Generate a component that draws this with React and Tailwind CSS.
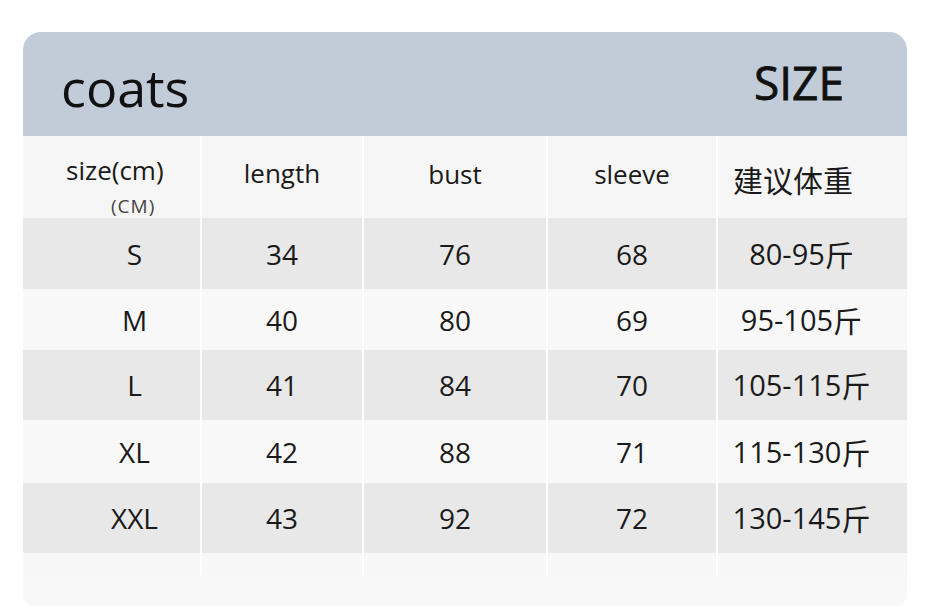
import React from "react";

const rows = [
  { h: "h-[71px]", bg: "bg-[#e8e8e8]", s: "S", l: "34", b: "76", sl: "68", w: "80-95" },
  { h: "h-[61px]", bg: "bg-[#f8f8f8]", s: "M", l: "40", b: "80", sl: "69", w: "95-105" },
  { h: "h-[70px]", bg: "bg-[#e8e8e8]", s: "L", l: "41", b: "84", sl: "70", w: "105-115" },
  { h: "h-[63px]", bg: "bg-[#f8f8f8]", s: "XL", l: "42", b: "88", sl: "71", w: "115-130" },
  { h: "h-[70px]", bg: "bg-[#e8e8e8]", s: "XXL", l: "43", b: "92", sl: "72", w: "130-145" },
];

const font = { fontFamily: '"Open Sans", "Noto Sans CJK SC", sans-serif' };

export default function App() {
  return (
    <div className="w-[932px] h-[606px] bg-white pt-[32px] pl-[23px] overflow-hidden" style={font}>
      <div className="w-[884px] h-[574px] rounded-t-[18px] rounded-b-[12px] overflow-hidden bg-[#f8f8f8] flex flex-col text-[#1a1a1a]">
        <div className="h-[104px] bg-[#c2cbd8] flex items-start justify-between pl-[38px] pr-[63px]">
          <div className="text-[52px] leading-[52px] pt-[29px] text-[#111]">coats</div>
          <div className="text-[46px] leading-[46px] pt-[27px] text-[#111] [-webkit-text-stroke:0.8px_#111]">SIZE</div>
        </div>

        <div className="grid grid-cols-[177px_160px_182px_168px_189px] gap-x-[2px] bg-white">
          {/* header row */}
          <div className="h-[82px] bg-[#f6f6f6] flex flex-col">
            <div className="text-[26px] leading-[30px] pt-[19px] pl-[43px]">size(cm)</div>
            <div className="text-[19px] leading-[20px] pt-[11px] pl-[88px] tracking-[1px] text-[#444]">(CM)</div>
          </div>
          <div className="h-[82px] bg-[#f6f6f6] text-[26px] leading-[30px] pt-[22px] text-center">length</div>
          <div className="h-[82px] bg-[#f6f6f6] text-[26px] leading-[30px] pt-[23px] text-center">bust</div>
          <div className="h-[82px] bg-[#f6f6f6] text-[26px] leading-[30px] pt-[23px] text-center">sleeve</div>
          <div className="h-[82px] bg-[#f6f6f6] text-[30px] leading-[30px] pt-[28px] pl-[15px]" style={{ fontFamily: '"Noto Sans CJK SC", sans-serif' }}>建议体重</div>

          {rows.map((r) => (
            <React.Fragment key={r.s}>
              <div className={`${r.h} ${r.bg} flex items-center justify-center pl-[46px] text-[28px] leading-[28px]`}>{r.s}</div>
              <div className={`${r.h} ${r.bg} flex items-center justify-center text-[28px] leading-[28px]`}>{r.l}</div>
              <div className={`${r.h} ${r.bg} flex items-center justify-center text-[28px] leading-[28px]`}>{r.b}</div>
              <div className={`${r.h} ${r.bg} flex items-center justify-center text-[28px] leading-[28px]`}>{r.sl}</div>
              <div className={`${r.h} ${r.bg} flex items-center justify-center pr-[22px] text-[29px] leading-[28px]`}>
                {r.w}
                <span className="text-[29px]" style={{ fontFamily: '"Noto Sans CJK SC", sans-serif' }}>斤</span>
              </div>
            </React.Fragment>
          ))}

          <div className="h-[22px] bg-[#f7f7f7]" />
          <div className="h-[22px] bg-[#f7f7f7]" />
          <div className="h-[22px] bg-[#f7f7f7]" />
          <div className="h-[22px] bg-[#f7f7f7]" />
          <div className="h-[22px] bg-[#f7f7f7]" />
        </div>
        <div className="flex-1 bg-[#f8f8f8]" />
      </div>
    </div>
  );
}
